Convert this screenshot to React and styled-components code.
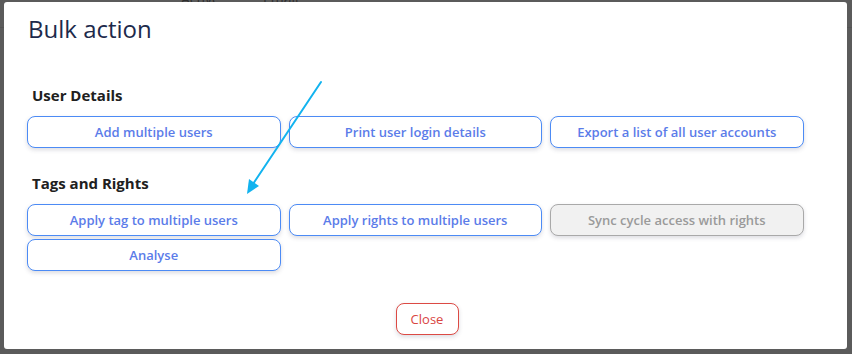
import React from 'react';
import styled, { createGlobalStyle } from 'styled-components';

const GlobalStyle = createGlobalStyle`
  html, body {
    margin: 0;
    padding: 0;
    width: 852px;
    height: 354px;
    overflow: hidden;
    background: #5b5b5b;
    font-family: "Open Sans", "Noto Sans", sans-serif;
  }
`;

const Backdrop = styled.div`
  position: relative;
  width: 852px;
  height: 354px;
  background: #5b5b5b;
  overflow: hidden;
`;

const BehindHeader = styled.div`
  display: flex;
  gap: 43px;
  padding-left: 181px;
  margin-top: -11px;
  font-size: 14px;
  color: #2e2e2e;
  border-bottom: 1px solid #535353;
  height: 38px;
`;

const Modal = styled.div`
  position: absolute;
  left: 4px;
  top: 2px;
  width: 843px;
  height: 347px;
  box-sizing: border-box;
  background: #fff;
  border-radius: 3px;
  padding: 12px 23px 0 23px;
`;

const Title = styled.h1`
  margin: 0 0 0 1px;
  font-size: 24px;
  line-height: 29px;
  font-weight: 400;
  color: #1d2a4b;
`;

const Section = styled.section`
  margin-top: ${(p) => p.$top}px;
`;

const SectionTitle = styled.h2`
  margin: 0 0 10px 5px;
  font-size: 15px;
  line-height: 21px;
  font-weight: 700;
  color: #202020;
`;

const ButtonGrid = styled.div`
  display: grid;
  grid-template-columns: repeat(3, 253.5px);
  column-gap: 8px;
  row-gap: 3px;
`;

const ActionButton = styled.button`
  height: 32px;
  box-sizing: border-box;
  border: 1px solid ${(p) => (p.disabled ? '#a9a9a9' : '#4c8bf5')};
  border-radius: 8px;
  background: ${(p) => (p.disabled ? '#f1f1f1' : '#fff')};
  color: ${(p) => (p.disabled ? '#9a9a9a' : '#5b7ce9')};
  font-family: "Open Sans", "Noto Sans", sans-serif;
  font-size: 13px;
  font-weight: 600;
  box-shadow: 0 2px 4px rgba(60, 60, 90, 0.18);
  padding: 0;
  cursor: ${(p) => (p.disabled ? 'default' : 'pointer')};
`;

const Footer = styled.div`
  display: flex;
  justify-content: center;
  margin-top: 32px;
`;

const CloseButton = styled.button`
  width: 63px;
  height: 32px;
  box-sizing: border-box;
  border: 1px solid #dc4a44;
  border-radius: 8px;
  background: #fff;
  color: #d9463f;
  font-family: "Open Sans", "Noto Sans", sans-serif;
  font-size: 13px;
  font-weight: 400;
  box-shadow: 0 2px 4px rgba(60, 60, 90, 0.18);
  margin-left: 3px;
`;

const Arrow = styled.svg`
  position: absolute;
  left: 240px;
  top: 78px;
  pointer-events: none;
`;

export default function App() {
  return (
    <Backdrop>
      <GlobalStyle />
      <BehindHeader>
        <span>Active</span>
        <span>Email</span>
      </BehindHeader>
      <Modal>
        <Title>Bulk action</Title>

        <Section $top={42}>
          <SectionTitle>User Details</SectionTitle>
          <ButtonGrid>
            <ActionButton>Add multiple users</ActionButton>
            <ActionButton>Print user login details</ActionButton>
            <ActionButton>Export a list of all user accounts</ActionButton>
          </ButtonGrid>
        </Section>

        <Section $top={25}>
          <SectionTitle>Tags and Rights</SectionTitle>
          <ButtonGrid>
            <ActionButton>Apply tag to multiple users</ActionButton>
            <ActionButton>Apply rights to multiple users</ActionButton>
            <ActionButton disabled>Sync cycle access with rights</ActionButton>
            <ActionButton>Analyse</ActionButton>
          </ButtonGrid>
        </Section>

        <Footer>
          <CloseButton>Close</CloseButton>
        </Footer>
      </Modal>
      <Arrow width="90" height="122" viewBox="0 0 90 122">
        <line x1="81" y1="4" x2="9" y2="112" stroke="#12b3ef" strokeWidth="2" strokeLinecap="round" />
        <path d="M7 116 L9 101 L19 108 Z" fill="#12b3ef" />
      </Arrow>
    </Backdrop>
  );
}
